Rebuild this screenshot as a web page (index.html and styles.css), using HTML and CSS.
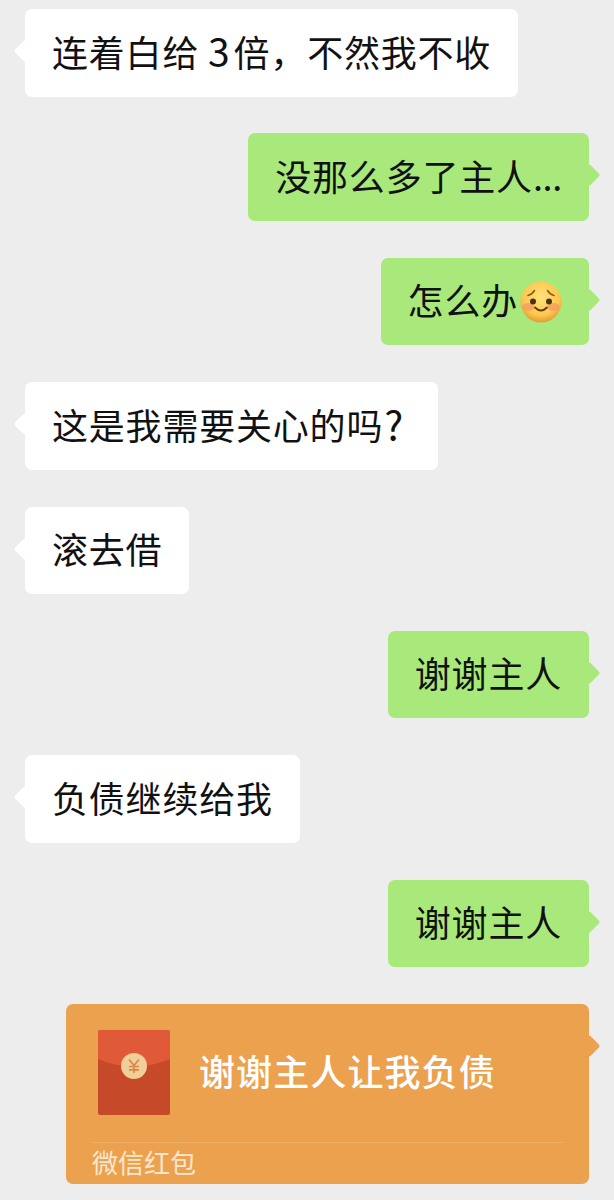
FILE: index.html
```html
<!DOCTYPE html>
<html lang="zh-CN">
<head>
<meta charset="utf-8">
<title>聊天记录</title>
<link rel="stylesheet" href="styles.css">
</head>
<body>
<main class="chat">
  <div class="row in"><div class="bubble"><span class="text">连着白给 <span class="digit">3</span>倍，不然我不收</span></div></div>
  <div class="row out"><div class="bubble"><span class="text">没那么多了主人<span class="dots">...</span></span></div></div>
  <div class="row out"><div class="bubble"><span class="text">怎么办</span><svg class="emoji" viewBox="0 0 42 42" aria-hidden="true">
    <defs><radialGradient id="face" cx="50%" cy="38%" r="62%"><stop offset="0" stop-color="#ffe27a"/><stop offset=".72" stop-color="#fcc84e"/><stop offset="1" stop-color="#e39a33"/></radialGradient></defs>
    <circle cx="21" cy="21" r="20.500" fill="url(#face)"/>
    <ellipse cx="8.500" cy="26" rx="6" ry="4" fill="#f59a63" opacity=".75"/>
    <ellipse cx="33.500" cy="26" rx="6" ry="4" fill="#f59a63" opacity=".75"/>
    <circle cx="13" cy="20.500" r="3" fill="#4d3213"/>
    <circle cx="29" cy="20.500" r="3" fill="#4d3213"/>
    <path d="M8 14.500q4-1 6.500-5M34 14.500q-4-1-6.500-5" fill="none" stroke="#8a5a1c" stroke-width="1.500" stroke-linecap="round"/>
    <path d="M15 26.500q6 6 12 0" fill="none" stroke="#5d3c12" stroke-width="1.800" stroke-linecap="round"/>
  </svg></div></div>
  <div class="row in"><div class="bubble"><span class="text">这是我需要关心的吗<span class="question">?</span></span></div></div>
  <div class="row in"><div class="bubble"><span class="text">滚去借</span></div></div>
  <div class="row out"><div class="bubble"><span class="text">谢谢主人</span></div></div>
  <div class="row in"><div class="bubble"><span class="text">负债继续给我</span></div></div>
  <div class="row out"><div class="bubble"><span class="text">谢谢主人</span></div></div>
  <div class="row out">
    <div class="bubble packet">
      <div class="packet-main">
        <svg class="envelope" viewBox="0 0 72 85" aria-hidden="true">
          <rect width="72" height="85" rx="2.500" fill="#c6492a"/>
          <path d="M0 2.500A2.500 2.500 0 0 1 2.500 0h67A2.500 2.500 0 0 1 72 2.500V29Q36 44 0 29z" fill="#e05a3a"/>
          <circle cx="36" cy="36" r="13" fill="#f0cf98"/>
          <path d="M31 29.500l5 6 5-6M36 35.500V43M31 36.500h10M31 39.800h10" fill="none" stroke="#d9864a" stroke-width="1.700"/>
        </svg>
        <span class="packet-title">谢谢主人让我负债</span>
      </div>
      <div class="packet-label">微信红包</div>
    </div>
  </div>
</main>
</body>
</html>
```

FILE: styles.css
```css
html, body {
  margin: 0;
  padding: 0;
  background: #ededed;
}

.chat {
  display: flex;
  flex-direction: column;
  gap: 36.9px;
  padding: 9px 25px 0;
  font-family: "Noto Sans CJK SC", "Noto Sans", sans-serif;
  color: #111111;
}

.row {
  display: flex;
}

.row.out {
  justify-content: flex-end;
}

.bubble {
  position: relative;
  display: flex;
  align-items: center;
  height: 87.5px;
  box-sizing: border-box;
  padding: 0 27px 5px;
  border-radius: 7px;
  font-size: 36px;
  line-height: 1;
  white-space: nowrap;
  background: #ffffff;
}

.text {
  letter-spacing: .8px;
}

.digit {
  display: inline-block;
  font-size: 39px;
  line-height: 1;
  margin: 0 3px 0 0;
}

.dots {
  letter-spacing: -.3px;
}

.question {
  display: inline-block;
  font-size: 40px;
  line-height: 1;
  margin: 0 7px 0 1px;
}

.row.out .bubble {
  background: #a9e97b;
}

.bubble::after {
  content: "";
  position: absolute;
  top: 34px;
  width: 16px;
  height: 16px;
  border-radius: 2px;
  background: inherit;
  transform: rotate(45deg);
}

.row.in .bubble::after {
  left: -8px;
}

.row.out .bubble::after {
  right: -8px;
}

.emoji {
  width: 42px;
  height: 42px;
  margin: 5px 0 0 2px;
  flex: none;
}

.row.out .packet {
  display: block;
  width: 523px;
  height: 180px;
  padding: 0;
  background: #eca14f;
  color: #fff;
}

.packet-main {
  display: flex;
  align-items: center;
  gap: 29px;
  padding: 26px 0 0 32px;
}

.envelope {
  width: 72px;
  height: 85px;
  flex: none;
}

.packet-title {
  font-size: 36px;
  font-weight: 500;
  letter-spacing: 1.1px;
  padding-bottom: 5px;
}

.packet-label {
  margin: 27px 26px 0;
  padding-top: 6px;
  border-top: 1px solid #f0ae67;
  font-size: 26px;
  line-height: 26px;
  color: #fbe7cf;
}
```
